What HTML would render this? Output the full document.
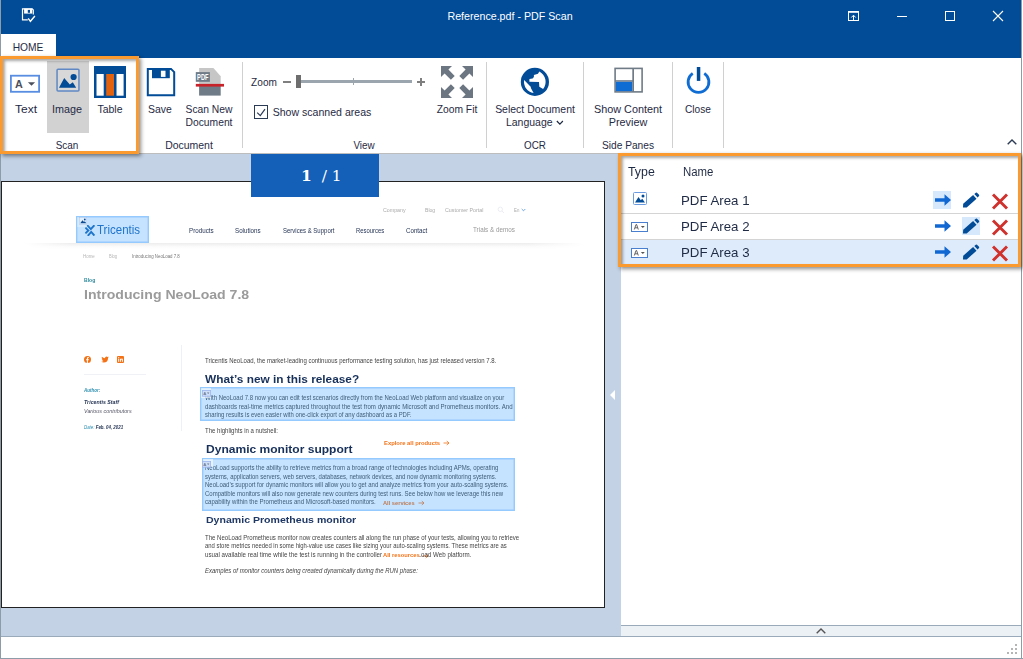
<!DOCTYPE html>
<html><head><meta charset="utf-8"><title>Reference.pdf - PDF Scan</title>
<style>
*{margin:0;padding:0;box-sizing:border-box}
html,body{width:1023px;height:659px;overflow:hidden;background:#fff}
body{position:relative;font-family:"Liberation Sans",sans-serif;font-size:12px;color:#1f2a44}
.abs{position:absolute}
#titlebar{left:0;top:0;width:1021px;height:58px;background:#014b97}
#title{left:510.200px;top:9.500px;white-space:nowrap;color:#fff;font-size:11px;line-height:13px;transform:translateX(-50%) scaleX(.97)}
#hometab{left:1px;top:34px;width:55px;height:22px;background:#fff;color:#1f2a44;font-size:12px;line-height:26px;text-align:center}
#ribbon{left:0;top:58px;width:1021px;height:95px;background:#fff}
.rl{position:absolute;white-space:nowrap;text-align:center;line-height:13px;font-size:11px;color:#1f2a44;transform:translateX(-50%) scaleX(var(--s,.87))}
.sep{position:absolute;top:62px;height:86px;width:1px;background:#d0d0d0}
#doc{left:1px;top:153px;width:620px;height:483px;background:#c3d2e5}
#page{left:1px;top:181px;width:604px;height:427px;background:#fff;border:1px solid #222}
#pglabel{left:251px;top:154px;width:128px;height:43px;background:#1460b8;color:#fff;font-family:"DejaVu Serif","Liberation Serif",serif;font-size:15.500px;line-height:43px;white-space:pre;padding-left:50px}
#rpanel{left:621px;top:153px;width:400px;height:472px;background:#fff}
#rbar{left:621px;top:625px;width:400px;height:12px;background:#ecf1f5;border-top:1px solid #9aaabb;border-bottom:1px solid #9aaabb}
#status{left:1px;top:636px;width:1020px;height:22px;background:#fff;border-top:1px solid #9aaabb}
#bl{left:0;top:0;width:1px;height:659px;background:#8e9ba8}
#br{left:1021px;top:0;width:1px;height:659px;background:#8e9ba8}
#bb{left:0;top:658px;width:1023px;height:1px;background:#8e9ba8}
.hl{position:absolute;border:3px solid #fb9a2e;box-shadow:2px 2px 4px rgba(0,0,0,.45), inset 2px 2px 3px rgba(0,0,0,.35)}
.ph{font-size:12px;line-height:14px;white-space:nowrap;transform-origin:0 50%;transform:scaleX(.95)}
.pa{font-size:13px;line-height:18px;white-space:nowrap;transform-origin:0 50%;transform:scaleX(1.02)}
.pt{position:absolute;white-space:nowrap;transform-origin:0 50%}
.sel{position:absolute;background:rgba(51,153,255,.285);box-shadow:inset 0 0 0 1.400px rgba(51,153,255,.32)}
</style></head><body>
<div class="abs" id="titlebar"></div>
<div class="abs" id="title">Reference.pdf - PDF Scan</div>

<svg class="abs" style="left:21px;top:7px" width="16" height="16" viewBox="0 0 16 16"><path d="M6.800 12.900H1.500V1.900H11.200l1.100 1.100V7.600" fill="none" stroke="#fff" stroke-width="1.200"/><rect x="3.100" y="1.600" width="8.100" height="5" fill="#fff"/><rect x="6.800" y="2.900" width="2.200" height="2.900" fill="#014b97"/><path d="M7.200 11.400l2.200 2.900 4.500-5.300" fill="none" stroke="#fff" stroke-width="1.400"/></svg>
<svg class="abs" style="left:847px;top:10px" width="13" height="12" viewBox="0 0 13 12"><rect x="1.500" y="1.500" width="10" height="9" fill="none" stroke="#fff" stroke-width="1"/><rect x="1" y="1" width="11" height="1.800" fill="#fff"/><path d="M6.500 10v-4.500M4.300 7.500l2.200-2.300 2.200 2.300" fill="none" stroke="#fff" stroke-width="1"/></svg>
<div class="abs" style="left:897px;top:16px;width:10px;height:1px;background:#fff"></div>
<div class="abs" style="left:945px;top:11px;width:10px;height:10px;border:1px solid #fff"></div>
<svg class="abs" style="left:992px;top:10px" width="12" height="12" viewBox="0 0 12 12"><path d="M1 1l10 10M11 1l-10 10" stroke="#fff" stroke-width="1.100" fill="none"/></svg>
<div class="abs" id="hometab"></div><div class="rl" style="--s:.93;left:28px;top:41px">HOME</div>
<div class="abs" id="ribbon"></div>
<div class="abs" id="doc"></div><div class="abs" style="left:1px;top:153px;width:1020px;height:1px;background:#bdbdbd"></div>
<div class="abs" id="page"></div>
<div class="abs" id="pglabel"><b>1</b>  / 1</div>
<div class="abs" id="rpanel"></div>
<div class="abs" id="rbar"></div>
<div class="abs" id="status"></div>
<div class="abs" id="bl"></div><div class="abs" id="br"></div><div class="abs" id="bb"></div>

<div class="abs" style="left:47px;top:61px;width:42px;height:72px;background:#d2d2d2"></div>
<!-- Text icon -->
<svg class="abs" style="left:8px;top:72px" width="36" height="24" viewBox="0 0 36 24">
<rect x="2.900" y="3.700" width="28.200" height="16.100" fill="#fff" stroke="#588de2" stroke-width="1.800"/>
<text x="7.100" y="15.500" font-family="Liberation Sans, sans-serif" font-size="10.800" font-weight="bold" fill="#4b505c">A</text>
<path d="M19.900 10.200h7.200l-3.600 3.600z" fill="#4b505c"/>
</svg>
<!-- Image icon -->
<svg class="abs" style="left:54px;top:66px" width="28" height="28" viewBox="0 0 28 28">
<rect x="3.050" y="3.150" width="21.900" height="21.800" rx="1" fill="#d8d8d8" stroke="#5f88c4" stroke-width="1.500"/>
<path d="M5 21.800l5.200-9.900 5.600 6.600 3-2.300 3.400 5.600z" fill="#014b97"/>
<circle cx="19.600" cy="11" r="3.100" fill="#014b97"/>
</svg>
<!-- Table icon -->
<svg class="abs" style="left:94px;top:66px" width="32" height="32" viewBox="0 0 32 32">
<rect x="0" y="0" width="32" height="32" fill="#014b97"/>
<rect x="2.5" y="8" width="7.2" height="21.7" fill="#fff"/>
<rect x="12.2" y="8" width="7.8" height="21.7" fill="#e2620e"/>
<rect x="22.5" y="8" width="7.1" height="21.7" fill="#fff"/>
</svg>
<!-- Save icon -->
<svg class="abs" style="left:146px;top:67px" width="30" height="30" viewBox="0 0 30 30">
<path d="M1.800 1.900h23.200l3.200 3.200v23.100h-26.400z" fill="#fff" stroke="#014b97" stroke-width="2"/>
<rect x="6" y="1" width="17.800" height="10.200" fill="#014b97"/>
<rect x="14.900" y="3.700" width="4.600" height="6.200" fill="#fff"/>
</svg>
<!-- Scan new doc icon -->
<svg class="abs" style="left:194px;top:66px" width="32" height="32" viewBox="0 0 32 32">
<path d="M5.100 2.100h14.300l7.300 8.200v9h-21.600z" fill="#c6c6c6"/>
<rect x="5.100" y="20" width="21.600" height="9.600" fill="#6f7b87"/>
<rect x="1.800" y="6.100" width="14.100" height="9.700" fill="#6f7b87"/>
<text x="8.800" y="14.300" text-anchor="middle" font-family="Liberation Sans, sans-serif" font-size="8.400" font-weight="bold" fill="#fff" textLength="11.400" lengthAdjust="spacingAndGlyphs">PDF</text>
<rect x="1.800" y="17.900" width="28.200" height="2.700" fill="#c8232a"/>
</svg>
<!-- Zoom slider -->
<div class="abs" style="left:283px;top:81px;width:8px;height:2px;background:#7f7f7f"></div>
<div class="abs" style="left:299px;top:80px;width:113px;height:3px;background:#9aa5ae"></div>
<div class="abs" style="left:353px;top:78px;width:1px;height:7px;background:#9aa5ae"></div>
<div class="abs" style="left:296px;top:75px;width:5px;height:13px;background:#6e6e6e"></div>
<div class="abs" style="left:417px;top:81px;width:8px;height:2px;background:#7f7f7f"></div>
<div class="abs" style="left:420px;top:78px;width:2px;height:8px;background:#7f7f7f"></div>
<!-- checkbox -->
<svg class="abs" style="left:254px;top:105px" width="14" height="14" viewBox="0 0 14 14">
<rect x=".5" y=".5" width="13" height="13" fill="#fff" stroke="#2b3a55"/>
<path d="M3.200 7.600l3.100 3.100 4.700-6.500" fill="none" stroke="#2b3a55" stroke-width="1.200"/>
</svg>
<!-- Zoom fit icon -->
<svg class="abs" style="left:441px;top:66px" width="32" height="32" viewBox="0 0 32 32">
<g fill="#6b7682">
<path d="M0 0h11l-3.6 3.6 6.3 6.3-3.8 3.8-6.3-6.3-3.6 3.6z"/>
<path d="M32 0h-11l3.6 3.6-6.3 6.3 3.8 3.8 6.3-6.3 3.6 3.6z"/>
<path d="M0 32h11l-3.6-3.6 6.3-6.3-3.8-3.8-6.3 6.3-3.6-3.6z"/>
<path d="M32 32h-11l3.6-3.6-6.3-6.3 3.8-3.8 6.3 6.3 3.6-3.6z"/>
</g></svg>
<!-- Globe -->
<svg class="abs" style="left:520px;top:67px" width="30" height="30" viewBox="0 0 30 30">
<circle cx="14.900" cy="14.900" r="14.100" fill="#014b97"/>
<path d="M19.300 4.500L18 6.700 13.900 8v1.900l-1.300 1.600-3.200.6v2.600l9.600.3.300 4.800 3.800 2.200A11.600 11.600 0 0 0 19.300 4.500z" fill="#fff"/>
<path d="M4.100 12.900l6.600 6.900.3 1.500 2.600 4.800A11.600 11.600 0 0 1 4.100 12.900z" fill="#fff"/>
</svg>
<!-- Show content preview -->
<svg class="abs" style="left:613px;top:67px" width="31" height="27" viewBox="0 0 31 27">
<rect x="2.100" y="1.400" width="27" height="23.500" fill="#fff" stroke="#6f7b87" stroke-width="1.600"/>
<rect x="2.900" y="14.600" width="16.500" height="9.500" fill="#0f6cd3"/>
<rect x="19.300" y="1.400" width="1.700" height="23.500" fill="#6f7b87"/>
<rect x="2.100" y="13.200" width="18" height="1.500" fill="#6f7b87"/>
</svg>
<!-- Close / power -->
<svg class="abs" style="left:685px;top:65px" width="28" height="30" viewBox="0 0 28 30">
<path d="M7.700 8.400a10.400 10.400 0 1 0 11.600 0" fill="none" stroke="#0f6cd3" stroke-width="2.800"/>
<rect x="11.800" y="2" width="3.500" height="13.900" fill="#014b97"/>
</svg>
<div class="sep" style="left:242px"></div><div class="sep" style="left:486px"></div><div class="sep" style="left:583px"></div><div class="sep" style="left:672px"></div><div class="sep" style="left:723px"></div>
<div class="rl" id="l1" style="--s:1.091;left:25.500px;top:103px">Text</div>
<div class="rl" id="l2" style="--s:0.980;left:67.300px;top:103px">Image</div>
<div class="rl" id="l3" style="--s:0.950;left:109.500px;top:103px">Table</div>
<div class="rl" id="l4" style="--s:0.948;left:160.200px;top:103px">Save</div>
<div class="rl" id="l5" style="--s:0.937;left:209.300px;top:103px">Scan New<br>Document</div>
<div class="rl" id="l6" style="--s:0.900;left:67px;top:139px">Scan</div>
<div class="rl" id="l7" style="--s:0.951;left:188.800px;top:139px">Document</div>
<div class="rl" id="l8" style="--s:0.916;left:263.500px;top:76px">Zoom</div>
<div class="rl" id="l9" style="--s:0.960;left:322px;top:106px">Show scanned areas</div>
<div class="rl" id="l10" style="--s:0.897;left:363.600px;top:139px">View</div>
<div class="rl" id="l11" style="--s:0.936;left:457.300px;top:103px">Zoom Fit</div>
<div class="rl" id="l12" style="--s:0.952;left:534.600px;top:103px">Select Document<br>Language <svg width="8" height="6" viewBox="0 0 8 6" style="margin-left:1px"><path d="M.8 1l3.200 3.200 3.200-3.200" fill="none" stroke="#1f2a44" stroke-width="1.300"/></svg></div>
<div class="rl" id="l13" style="--s:0.895;left:534.600px;top:139px">OCR</div>
<div class="rl" id="l14" style="--s:0.985;left:627.600px;top:103px">Show Content<br>Preview</div>
<div class="rl" id="l15" style="--s:0.926;left:627.500px;top:139px">Side Panes</div>
<div class="rl" id="l16" style="--s:0.921;left:697.500px;top:103px">Close</div>
<svg class="abs" style="left:1006px;top:138px" width="12" height="8" viewBox="0 0 12 8"><path d="M1.700 6.300l4.300-4.300 4.300 4.300" fill="none" stroke="#2b3a55" stroke-width="1.400"/></svg>

<!--PAGE-->
<div class="abs" style="left:25px;top:243px;width:559px;height:6px;background:linear-gradient(#ededed,#fbfbfb 60%,#fff);-webkit-mask-image:linear-gradient(90deg,transparent,#000 8%,#000 90%,transparent);mask-image:linear-gradient(90deg,transparent,#000 8%,#000 90%,transparent)"></div>
<div class="abs" style="left:181px;top:345px;width:1px;height:86px;background:#edf0f6"></div>
<div class="abs" style="left:84px;top:374px;width:62px;height:1px;background:#eff1f6"></div>
<!-- logo X -->
<svg class="abs" style="left:84.500px;top:225px" width="10" height="11" viewBox="0 0 10 11"><g fill="none" stroke="#1667b7" stroke-width="1.900"><path d="M2.200 .2l3.600 3.900 3.600-3.900"/><path d="M2.800 10.900l3.400-4 3.200 3.700"/><path d="M.4 2.600l3 2.900-3 2.900"/></g></svg>
<!-- search + chevron -->
<svg class="abs" style="left:497px;top:206px" width="8" height="8" viewBox="0 0 8 8"><circle cx="3.300" cy="3.300" r="2.200" fill="none" stroke="#e6e9ef" stroke-width=".8"/><path d="M5 5l2 2" stroke="#e6e9ef" stroke-width=".8"/></svg>
<svg class="abs" style="left:521px;top:208px" width="5" height="4" viewBox="0 0 5 4"><path d="M.7 1l1.800 1.800 1.800-1.800" fill="none" stroke="#4a8fd6" stroke-width=".8"/></svg>
<!-- social icons -->
<svg class="abs" style="left:84px;top:356px" width="7" height="7" viewBox="0 0 7 7"><circle cx="3.500" cy="3.500" r="3.500" fill="#f47216"/><path d="M3.900 7v-2.800h.9l.1-1h-1v-.6q0-.5.500-.5h.5v-.9q-.4-.1-.8-.1-1.200 0-1.200 1.300v.8h-.8v1h.8v2.800z" fill="#fff"/></svg>
<svg class="abs" style="left:100.500px;top:356px" width="8" height="7" viewBox="0 0 8 7"><path d="M7.800 1q-.4.200-.9.300.5-.3.700-.8-.5.300-1 .4-.4-.5-1.100-.5-1.500 0-1.500 1.500v.3q-1.900-.1-3.100-1.500-.6 1.200.5 2-.4 0-.7-.2 0 1.200 1.200 1.500-.3.100-.7 0 .3 1 1.400 1-1 .8-2.300.7 1.100.7 2.400.7 4.200 0 4.400-4.500.4-.3.700-.9z" fill="#f47216"/></svg>
<svg class="abs" style="left:117px;top:356px" width="7" height="7" viewBox="0 0 7 7"><rect width="7" height="7" rx="1" fill="#f47216"/><rect x="1.200" y="2.700" width="1" height="3.100" fill="#fff"/><circle cx="1.700" cy="1.600" r=".6" fill="#fff"/><path d="M3 2.700h.9v.5q.3-.6 1-.6 1 0 1 1.200v2h-1v-1.800q0-.6-.5-.6t-.5.600v1.800h-.9z" fill="#fff"/></svg>
<!-- arrows -->
<svg class="abs" style="left:442.500px;top:440px" width="7" height="6" viewBox="0 0 7 6"><path d="M.5 3h5.500M3.800 1l2.200 2-2.200 2" fill="none" stroke="#f47216" stroke-width=".8"/></svg>
<svg class="abs" style="left:417.500px;top:500px" width="7" height="6" viewBox="0 0 7 6"><path d="M.5 3h5.500M3.800 1l2.200 2-2.200 2" fill="none" stroke="#f47216" stroke-width=".8"/></svg>
<svg class="abs" style="left:421.500px;top:552.500px" width="7" height="6" viewBox="0 0 7 6"><path d="M.5 3h5.500M3.800 1l2.200 2-2.200 2" fill="none" stroke="#f47216" stroke-width=".8"/></svg>
<!--PT--><div class="pt" id="p0" style="left:382.7px;top:208.06px;font-size:5.6px;line-height:5.6px;color:#aaa;transform:scaleX(0.9435)">Company</div>
<div class="pt" id="p1" style="left:424.6px;top:208.06px;font-size:5.6px;line-height:5.6px;color:#aaa;transform:scaleX(0.9105)">Blog</div>
<div class="pt" id="p2" style="left:444.7px;top:208.06px;font-size:5.6px;line-height:5.6px;color:#aaa;transform:scaleX(0.9500)">Customer Portal</div>
<div class="pt" id="p3" style="left:514.0px;top:208.06px;font-size:5.6px;line-height:5.6px;color:#aaa;transform:scaleX(0.7744)">En</div>
<div class="pt" id="p4" style="left:189.2px;top:227.88px;font-size:6.4px;line-height:6.4px;color:#1f2f50;transform:scaleX(0.9749)">Products</div>
<div class="pt" id="p5" style="left:235.1px;top:227.88px;font-size:6.4px;line-height:6.4px;color:#1f2f50;transform:scaleX(0.9735)">Solutions</div>
<div class="pt" id="p6" style="left:282.6px;top:227.88px;font-size:6.4px;line-height:6.4px;color:#1f2f50;transform:scaleX(0.9396)">Services &amp; Support</div>
<div class="pt" id="p7" style="left:355.8px;top:227.88px;font-size:6.4px;line-height:6.4px;color:#1f2f50;transform:scaleX(0.9232)">Resources</div>
<div class="pt" id="p8" style="left:405.6px;top:227.88px;font-size:6.4px;line-height:6.4px;color:#1f2f50;transform:scaleX(0.9668)">Contact</div>
<div class="pt" id="p9" style="left:472.9px;top:227.24px;font-size:6.8px;line-height:6.8px;color:#999;transform:scaleX(0.9295)">Trials &amp; demos</div>
<div class="pt" id="p10" style="left:97.1px;top:223.76px;font-size:12.8px;line-height:12.8px;color:#1667b7;transform:scaleX(0.9000)">Tricentis</div>
<div class="pt" id="p11" style="left:83.0px;top:255.31px;font-size:4.6px;line-height:4.6px;color:#b5b5b5;transform:scaleX(0.9620)">Home</div>
<div class="pt" id="p12" style="left:108.9px;top:255.31px;font-size:4.6px;line-height:4.6px;color:#b5b5b5;transform:scaleX(0.8801)">Blog</div>
<div class="pt" id="p13" style="left:132.0px;top:255.31px;font-size:4.6px;line-height:4.6px;color:#777;transform:scaleX(0.9498)">Introducing NeoLoad 7.8</div>
<div class="pt" id="p14" style="left:83.5px;top:277.42px;font-size:6px;line-height:6px;color:#2e8a9e;font-weight:bold;transform:scaleX(0.8468)">Blog</div>
<div class="pt" id="p15" style="left:84.0px;top:287.70px;font-size:13.7px;line-height:13.7px;color:#9b9b9b;font-weight:bold;transform:scaleX(1.0295)">Introducing NeoLoad 7.8</div>
<div class="pt" id="p16" style="left:83.7px;top:387.97px;font-size:5px;line-height:5px;color:#2e8fb0;font-style:italic;font-weight:bold;transform:scaleX(0.8969)">Author:</div>
<div class="pt" id="p17" style="left:83.7px;top:400.27px;font-size:5px;line-height:5px;color:#1f2f50;font-style:italic;font-weight:bold;transform:scaleX(1.0521)">Tricentis Staff</div>
<div class="pt" id="p18" style="left:83.7px;top:408.57px;font-size:5px;line-height:5px;color:#556;font-style:italic;transform:scaleX(1.0749)">Various contributors</div>
<div class="pt" id="p19" style="left:83.7px;top:424.57px;font-size:5px;line-height:5px;color:#1f2f50;font-style:italic;font-weight:bold;transform:scaleX(0.8790)"><span style="color:#2e8fb0;font-weight:normal">Date:</span> Feb. 04, 2021</div>
<div class="pt" id="p20" style="left:205.3px;top:357.67px;font-size:6.3px;line-height:6.3px;color:#444;transform:scaleX(0.9551)">Tricentis NeoLoad, the market-leading continuous performance testing solution, has just released version 7.8.</div>
<div class="pt" id="p21" style="left:205.3px;top:373.08px;font-size:11.6px;line-height:11.6px;color:#17305a;font-weight:bold;transform:scaleX(1.0213)">What’s new in this release?</div>
<div class="pt" id="p22" style="left:205.3px;top:395.07px;font-size:6.3px;line-height:6.3px;color:#444;transform:scaleX(0.9533)">With NeoLoad 7.8 now you can edit test scenarios directly from the NeoLoad Web platform and visualize on your</div>
<div class="pt" id="p23" style="left:205.3px;top:403.77px;font-size:6.3px;line-height:6.3px;color:#444;transform:scaleX(0.9711)">dashboards real-time metrics captured throughout the test from dynamic Microsoft and Prometheus monitors. And</div>
<div class="pt" id="p24" style="left:205.3px;top:412.07px;font-size:6.3px;line-height:6.3px;color:#444;transform:scaleX(0.9394)">sharing results is even easier with one-click export of any dashboard as a PDF.</div>
<div class="pt" id="p25" style="left:205.3px;top:427.87px;font-size:6.3px;line-height:6.3px;color:#444;transform:scaleX(0.9566)">The highlights in a nutshell:</div>
<div class="pt" id="p26" style="left:383.6px;top:439.92px;font-size:6px;line-height:6px;color:#f47216;font-weight:bold;transform:scaleX(0.9725)">Explore all products</div>
<div class="pt" id="p27" style="left:205.5px;top:443.73px;font-size:11.3px;line-height:11.3px;color:#17305a;font-weight:bold;transform:scaleX(1.0657)">Dynamic monitor support</div>
<div class="pt" id="p28" style="left:205.3px;top:465.47px;font-size:6.3px;line-height:6.3px;color:#444;transform:scaleX(0.9601)">NeoLoad supports the ability to retrieve metrics from a broad range of technologies including APMs, operating</div>
<div class="pt" id="p29" style="left:205.3px;top:473.77px;font-size:6.3px;line-height:6.3px;color:#444;transform:scaleX(0.9462)">systems, application servers, web servers, databases, network devices, and now dynamic monitoring systems.</div>
<div class="pt" id="p30" style="left:205.3px;top:482.27px;font-size:6.3px;line-height:6.3px;color:#444;transform:scaleX(0.9561)">NeoLoad’s support for dynamic monitors will allow you to get and analyze metrics from your auto-scaling systems.</div>
<div class="pt" id="p31" style="left:205.3px;top:490.87px;font-size:6.3px;line-height:6.3px;color:#444;transform:scaleX(0.9537)">Compatible monitors will also now generate new counters during test runs. See below how we leverage this new</div>
<div class="pt" id="p32" style="left:205.3px;top:499.37px;font-size:6.3px;line-height:6.3px;color:#444;transform:scaleX(0.9663)">capability within the Prometheus and Microsoft-based monitors.</div>
<div class="pt" id="p33" style="left:383.2px;top:499.92px;font-size:6px;line-height:6px;color:#f47216;font-weight:bold;transform:scaleX(0.9473)">All services</div>
<div class="pt" id="p34" style="left:205.5px;top:515.30px;font-size:9.8px;line-height:9.8px;color:#1f3864;font-weight:bold;transform:scaleX(1.0777)">Dynamic Prometheus monitor</div>
<div class="pt" id="p35" style="left:205.3px;top:534.87px;font-size:6.3px;line-height:6.3px;color:#444;transform:scaleX(0.9590)">The NeoLoad Prometheus monitor now creates counters all along the run phase of your tests, allowing you to retrieve</div>
<div class="pt" id="p36" style="left:205.3px;top:543.17px;font-size:6.3px;line-height:6.3px;color:#444;transform:scaleX(0.9383)">and store metrics needed in some high-value use cases like sizing your auto-scaling systems. These metrics are as</div>
<div class="pt" id="p37" style="left:205.3px;top:551.77px;font-size:6.3px;line-height:6.3px;color:#444;transform:scaleX(0.9841)">usual available real time while the test is running in the controller and the NeoLoad Web platform.</div>
<div class="pt" id="p38" style="left:383.2px;top:552.25px;font-size:6.2px;line-height:6.2px;color:#f47216;font-weight:bold;background:#fff;transform:scaleX(0.9332)">All resources</div>
<div class="pt" id="p39" style="left:205.3px;top:567.87px;font-size:6.3px;line-height:6.3px;color:#444;font-style:italic;transform:scaleX(0.9515)">Examples of monitor counters being created dynamically during the RUN phase:</div><!--/PT-->
<div class="sel" style="left:76.100px;top:216px;width:73.100px;height:26.800px"></div>
<div class="sel" style="left:200.100px;top:387.300px;width:315.100px;height:33.600px"></div>
<div class="sel" style="left:202px;top:457.600px;width:312.500px;height:53.300px"></div>
<div class="abs" style="left:77px;top:217px;width:9.500px;height:9.600px;background:rgba(255,255,255,.32)"></div>
<div class="abs" style="left:201px;top:388.300px;width:10px;height:9.400px;background:rgba(255,255,255,.55)"></div>
<div class="abs" style="left:203px;top:458.600px;width:9.800px;height:8.600px;background:rgba(255,255,255,.55)"></div>
<svg class="abs" style="left:78.500px;top:217px" width="8" height="8" viewBox="0 0 8 8"><rect x=".3" y=".3" width="7.400" height="7" fill="rgba(255,255,255,.25)" stroke="rgba(120,140,180,.35)" stroke-width=".6"/><path d="M1.200 6.300l2.300-3 1.500 1.800.9-.9 1.300 2.100z" fill="#0c4a92"/><circle cx="5.800" cy="2.500" r=".9" fill="#0c4a92"/></svg>
<svg class="abs" style="left:202px;top:390.200px" width="9" height="7" viewBox="0 0 9 7"><rect x=".4" y=".4" width="8.200" height="5.800" fill="rgba(205,220,247,.85)" stroke="#9db6ee" stroke-width=".8"/><text x="1.300" y="4.900" font-family="Liberation Sans, sans-serif" font-size="4.200" font-weight="bold" fill="#6b7688">A</text><path d="M5 2.500h2.400l-1.200 1.400z" fill="#6b7688"/></svg>
<svg class="abs" style="left:202.300px;top:460.800px" width="9" height="7" viewBox="0 0 9 7"><rect x=".4" y=".4" width="8.200" height="5.800" fill="rgba(205,220,247,.85)" stroke="#9db6ee" stroke-width=".8"/><text x="1.300" y="4.900" font-family="Liberation Sans, sans-serif" font-size="4.200" font-weight="bold" fill="#6b7688">A</text><path d="M5 2.500h2.400l-1.200 1.400z" fill="#6b7688"/></svg>
<div class="abs" style="left:1015px;top:644px;width:2px;height:2px;background:#b5b5b5"></div><div class="abs" style="left:1011px;top:648px;width:2px;height:2px;background:#b5b5b5"></div><div class="abs" style="left:1015px;top:648px;width:2px;height:2px;background:#b5b5b5"></div><div class="abs" style="left:1007px;top:652px;width:2px;height:2px;background:#b5b5b5"></div><div class="abs" style="left:1011px;top:652px;width:2px;height:2px;background:#b5b5b5"></div><div class="abs" style="left:1015px;top:652px;width:2px;height:2px;background:#b5b5b5"></div>

<div class="abs" style="left:621px;top:240px;width:400px;height:24px;background:#ddebfa"></div>
<div class="abs" style="left:621px;top:213px;width:400px;height:1px;background:#d4d4d4"></div>
<div class="abs" style="left:621px;top:239px;width:400px;height:1px;background:#d4d4d4"></div>
<div class="m ph abs" style="left:628px;top:165px;transform:scaleX(1.03)">Type</div>
<div class="m ph abs" style="left:683px;top:165px">Name</div>
<svg class="abs" style="left:633px;top:192px" width="14" height="13" viewBox="0 0 14 13"><rect x=".5" y=".5" width="13" height="12" rx="1" fill="#fff" stroke="#6a9ae0"/><path d="M2 10.500l3.500-5.500 2.300 3.200 1.400-1.500 2.800 3.800z" fill="#014b97"/><circle cx="10" cy="4" r="1.500" fill="#014b97"/></svg><div class="m pa abs" style="left:680.500px;top:192px">PDF Area 1</div><div class="abs" style="left:933px;top:191px;width:18px;height:18px;background:#d6e8fb"></div><svg class="abs" style="left:934px;top:193px" width="18" height="14" viewBox="0 0 18 14"><path d="M1 5.200h9.500v-4l6.500 5.800-6.500 5.800v-4h-9.500z" fill="#1268d3"/></svg><svg class="abs" style="left:962px;top:191px" width="18" height="18" viewBox="0 0 18 18"><path d="M1 16.500l.2-3.700 9.900-8.700 3.400 3.600-9.800 8.800z" fill="#014b97"/><path d="M12.300 3.100l1.500-1.400q.6-.5 1.200 0l2 2.100q.5.600 0 1.200l-1.400 1.400z" fill="#014b97"/></svg><svg class="abs" style="left:991px;top:192px" width="18" height="18" viewBox="0 0 18 18"><path d="M2 2.500l14 14M16 2.500l-14 14" stroke="#d0312d" stroke-width="2.900" fill="none"/></svg><svg class="abs" style="left:631px;top:222px" width="17" height="10" viewBox="0 0 17 10"><rect x=".5" y=".5" width="16" height="9" fill="#fff" stroke="#4a7fd0"/><path d="M3.300 7.500l1.700-5h.6l1.700 5m-3.300-1.700h2.600" fill="none" stroke="#555" stroke-width=".9"/><path d="M9.800 4h4l-2 2z" fill="#555"/></svg><div class="m pa abs" style="left:680.500px;top:218px">PDF Area 2</div><div class="abs" style="left:962px;top:217px;width:18px;height:18px;background:#d6e8fb"></div><svg class="abs" style="left:934px;top:219px" width="18" height="14" viewBox="0 0 18 14"><path d="M1 5.200h9.500v-4l6.500 5.800-6.500 5.800v-4h-9.500z" fill="#1268d3"/></svg><svg class="abs" style="left:962px;top:217px" width="18" height="18" viewBox="0 0 18 18"><path d="M1 16.500l.2-3.700 9.900-8.700 3.400 3.600-9.800 8.800z" fill="#014b97"/><path d="M12.300 3.100l1.500-1.400q.6-.5 1.200 0l2 2.100q.5.600 0 1.200l-1.400 1.400z" fill="#014b97"/></svg><svg class="abs" style="left:991px;top:218px" width="18" height="18" viewBox="0 0 18 18"><path d="M2 2.500l14 14M16 2.500l-14 14" stroke="#d0312d" stroke-width="2.900" fill="none"/></svg><svg class="abs" style="left:631px;top:248px" width="17" height="10" viewBox="0 0 17 10"><rect x=".5" y=".5" width="16" height="9" fill="#fff" stroke="#4a7fd0"/><path d="M3.300 7.500l1.700-5h.6l1.700 5m-3.300-1.700h2.600" fill="none" stroke="#555" stroke-width=".9"/><path d="M9.800 4h4l-2 2z" fill="#555"/></svg><div class="m pa abs" style="left:680.500px;top:244px">PDF Area 3</div><svg class="abs" style="left:934px;top:245px" width="18" height="14" viewBox="0 0 18 14"><path d="M1 5.200h9.500v-4l6.500 5.800-6.500 5.800v-4h-9.500z" fill="#1268d3"/></svg><svg class="abs" style="left:962px;top:243px" width="18" height="18" viewBox="0 0 18 18"><path d="M1 16.500l.2-3.700 9.900-8.700 3.400 3.600-9.800 8.800z" fill="#014b97"/><path d="M12.300 3.100l1.500-1.400q.6-.5 1.200 0l2 2.100q.5.600 0 1.200l-1.400 1.400z" fill="#014b97"/></svg><svg class="abs" style="left:991px;top:244px" width="18" height="18" viewBox="0 0 18 18"><path d="M2 2.500l14 14M16 2.500l-14 14" stroke="#d0312d" stroke-width="2.900" fill="none"/></svg>
<svg class="abs" style="left:815px;top:627px" width="12" height="8" viewBox="0 0 12 8"><path d="M1.700 6.300l4.300-4.300 4.300 4.300" fill="none" stroke="#555" stroke-width="1.400"/></svg>
<div class="abs" style="left:610px;top:390px;width:0;height:0;border-top:5px solid transparent;border-bottom:5px solid transparent;border-right:5px solid #fff"></div>

<div class="hl" style="left:0;top:56px;width:139px;height:98px"></div>
<div class="hl" style="left:618px;top:153px;width:403px;height:114px"></div>
</body></html>
